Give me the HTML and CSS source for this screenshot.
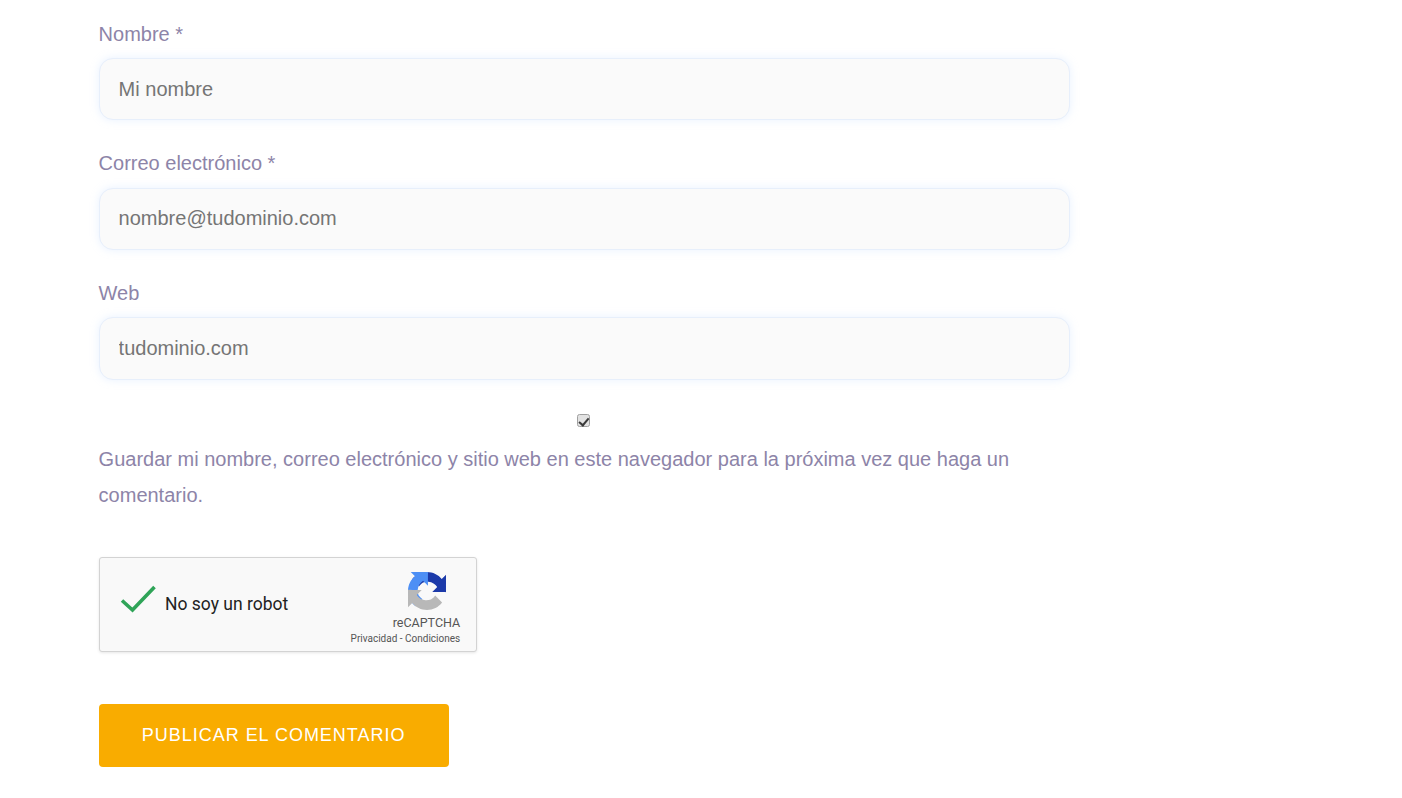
FILE: index.html
```html
<!DOCTYPE html>
<html lang="es">
<head>
<meta charset="utf-8">
<title>Comentario</title>
<link rel="stylesheet" href="styles.css">
</head>
<body>
<form class="comment-form">
  <div class="field">
    <label class="field-label" for="n">Nombre *</label>
    <input class="field-input" id="n" type="text" placeholder="Mi nombre">
  </div>
  <div class="field">
    <label class="field-label" for="e">Correo electrónico *</label>
    <input class="field-input" id="e" type="text" placeholder="nombre@tudominio.com">
  </div>
  <div class="field">
    <label class="field-label" for="w">Web</label>
    <input class="field-input" id="w" type="text" placeholder="tudominio.com">
  </div>
  <div class="cookies">
    <input class="cookies-check" id="c" type="checkbox" checked>
    <label class="cookies-label" for="c">Guardar mi nombre, correo electrónico y sitio web en este navegador para la próxima vez que haga un comentario.</label>
  </div>
  <div class="captcha">
    <svg class="captcha-check" viewBox="0 0 36 28" width="36" height="28" aria-hidden="true">
      <path d="M2 15.5 L12.5 25 L34.5 2" fill="none" stroke="#2fa458" stroke-width="3.6"/>
    </svg>
    <span class="captcha-text">No soy un robot</span>
    <div class="captcha-brand">
      <svg class="captcha-logo" viewBox="0 0 64 64" width="38" height="38" aria-hidden="true">
        <path d="M64 31.955l-.033-1.37V4.687l-7.16 7.16C50.948 4.674 42.033.093 32.05.093c-10.4 0-19.622 4.96-25.458 12.64l11.736 11.86a15.55 15.55 0 0 1 4.754-5.334c2.05-1.6 4.952-2.906 9.968-2.906.606 0 1.074.07 1.42.2 6.2.49 11.6 3.91 14.74 8.9l-8.307 8.308c10.522-.04 22.41-.066 23.096.193" fill="#1c3aa9"/>
        <path d="M31.862.094l-1.37.033H4.594l7.16 7.16C4.58 13.147 0 22.06 0 32.046c0 10.4 4.96 19.622 12.64 25.458L24.5 45.768a15.55 15.55 0 0 1-5.334-4.754c-1.6-2.05-2.906-4.952-2.906-9.968 0-.606.07-1.074.2-1.42.49-6.2 3.91-11.6 8.9-14.74l8.308 8.307c-.04-10.522-.066-22.41.193-23.096" fill="#4d8ff5"/>
        <path d="M.001 32.045l.032 1.37v25.898l7.16-7.16c5.86 7.173 14.774 11.754 24.76 11.754 10.4 0 19.622-4.96 25.458-12.64L45.674 39.406a15.55 15.55 0 0 1-4.754 5.334c-2.05 1.6-4.952 2.906-9.968 2.906-.606 0-1.074-.07-1.42-.2-6.2-.49-11.6-3.91-14.74-8.9l8.307-8.308c-10.522.04-22.41.066-23.096-.193" fill="#b8b8b8"/>
      </svg>
      <span class="captcha-name">reCAPTCHA</span>
      <span class="captcha-links">Privacidad - Condiciones</span>
    </div>
  </div>
  <button class="submit" type="button">PUBLICAR EL COMENTARIO</button>
</form>
</body>
</html>
```
FILE: styles.css
```css
* {
  box-sizing: border-box;
}

html,
body {
  margin: 0;
  padding: 0;
  background: #fff;
  overflow: hidden;
}

body {
  height: 798px;
  font-family: "Liberation Sans", Arial, sans-serif;
  font-size: 20px;
  line-height: 36px;
  color: #8d84a8;
}

.comment-form {
  width: 971.4px;
  margin-left: 98.6px;
  padding-top: 15.5px;
  display: flex;
  flex-direction: column;
}

.field {
  display: flex;
  flex-direction: column;
  gap: 6.5px;
  margin-bottom: 24.7px;
}

.field-label {
  display: block;
  height: 36px;
}

.field-input {
  display: block;
  width: 100%;
  height: 62.4px;
  padding: 0 19px;
  border: 1px solid #e7effb;
  border-radius: 14px;
  background: #fafafa;
  box-shadow: 0 0 8px rgba(190, 215, 255, 0.35);
  font-family: inherit;
  font-size: 20px;
  color: #757575;
  outline: none;
}

.field-input::placeholder {
  color: #757575;
  opacity: 1;
}

.cookies {
  display: flex;
  flex-direction: column;
  margin-top: 10.2px;
  margin-bottom: 43.5px;
}

.cookies-check {
  appearance: none;
  position: relative;
  display: block;
  width: 13px;
  height: 13px;
  margin: 0 0 14px 478.4px;
  border: 1px solid #a0a0a0;
  border-radius: 2.5px;
  background: #e2e2e2;
}

.cookies-check::after {
  content: "";
  position: absolute;
  left: 3.2px;
  top: 0.6px;
  width: 4.2px;
  height: 7.6px;
  border-right: 2.6px solid #3a3a3a;
  border-bottom: 2.6px solid #3a3a3a;
  transform: rotate(40deg);
}

.cookies-label {
  display: block;
}

.captcha {
  display: flex;
  align-items: center;
  position: relative;
  width: 378.8px;
  height: 95px;
  padding-left: 20.4px;
  border: 1px solid #d3d3d3;
  border-radius: 3px;
  background: #f9f9f9;
  box-shadow: 0 1px 3px rgba(0, 0, 0, 0.1);
  font-family: Roboto, "Liberation Sans", sans-serif;
  color: #000;
}

.captcha-check {
  flex: none;
  margin-top: -11px;
}

.captcha-text {
  margin-left: 9px;
  font-size: 17.5px;
  line-height: 24px;
  color: #222;
}

.captcha-brand {
  position: absolute;
  right: 16.2px;
  top: 14px;
  display: flex;
  flex-direction: column;
  align-items: flex-end;
}

.captcha-logo {
  margin-right: 14px;
}

.captcha-name {
  margin-top: 3px;
  font-size: 12.5px;
  line-height: 20px;
  color: #555;
}

.captcha-links {
  margin-top: -2px;
  font-size: 10px;
  line-height: 16px;
  color: #555;
}

.submit {
  width: 350px;
  height: 63px;
  margin-top: 52px;
  border: 0;
  border-radius: 4px;
  background: #f9ac00;
  color: #fff;
  font-family: inherit;
  font-size: 18px;
  letter-spacing: 0.98px;
}
```
